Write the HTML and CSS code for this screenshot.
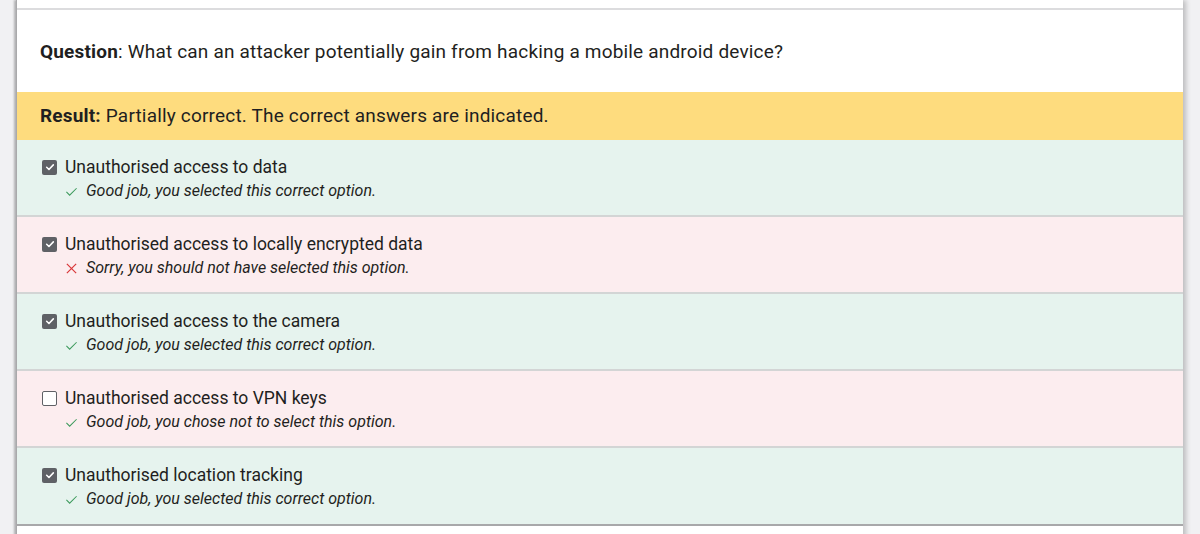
FILE: index.html
```html
<!DOCTYPE html>
<html>
<head>
<meta charset="utf-8">
<link rel="stylesheet" href="styles.css">
</head>
<body>
<div class="page">
  <div class="card">
    <div class="top-strip"></div>
    <div class="question"><b>Question</b>: What can an attacker potentially gain from hacking a mobile android device?</div>
    <div class="result"><b>Result:</b> Partially correct. The correct answers are indicated.</div>
    <div class="option good">
      <div class="opt-line"><span class="cb checked"><svg viewBox="0 0 16 16" width="16" height="16"><path d="M4.2 8.3 L6.8 10.8 L11.8 5.6" fill="none" stroke="#fff" stroke-width="1.8" stroke-linecap="round" stroke-linejoin="round"/></svg></span><span class="opt-text">Unauthorised access to data</span></div>
      <div class="fb"><svg class="ic" viewBox="0 0 14 14" width="14" height="14"><path d="M1.5 7.5 L5 11 L12.5 3.5" fill="none" stroke="#3d9a5c" stroke-width="1.1"/></svg><span>Good job, you selected this correct option.</span></div>
    </div>
    <div class="option bad">
      <div class="opt-line"><span class="cb checked"><svg viewBox="0 0 16 16" width="16" height="16"><path d="M4.2 8.3 L6.8 10.8 L11.8 5.6" fill="none" stroke="#fff" stroke-width="1.8" stroke-linecap="round" stroke-linejoin="round"/></svg></span><span class="opt-text">Unauthorised access to locally encrypted data</span></div>
      <div class="fb"><svg class="ic" viewBox="0 0 14 14" width="14" height="14"><path d="M2 2 L12 12 M12 2 L2 12" fill="none" stroke="#d9383a" stroke-width="1.3"/></svg><span>Sorry, you should not have selected this option.</span></div>
    </div>
    <div class="option good">
      <div class="opt-line"><span class="cb checked"><svg viewBox="0 0 16 16" width="16" height="16"><path d="M4.2 8.3 L6.8 10.8 L11.8 5.6" fill="none" stroke="#fff" stroke-width="1.8" stroke-linecap="round" stroke-linejoin="round"/></svg></span><span class="opt-text">Unauthorised access to the camera</span></div>
      <div class="fb"><svg class="ic" viewBox="0 0 14 14" width="14" height="14"><path d="M1.5 7.5 L5 11 L12.5 3.5" fill="none" stroke="#3d9a5c" stroke-width="1.1"/></svg><span>Good job, you selected this correct option.</span></div>
    </div>
    <div class="option bad">
      <div class="opt-line"><span class="cb"></span><span class="opt-text">Unauthorised access to VPN keys</span></div>
      <div class="fb"><svg class="ic" viewBox="0 0 14 14" width="14" height="14"><path d="M1.5 7.5 L5 11 L12.5 3.5" fill="none" stroke="#3d9a5c" stroke-width="1.1"/></svg><span>Good job, you chose not to select this option.</span></div>
    </div>
    <div class="option good last">
      <div class="opt-line"><span class="cb checked"><svg viewBox="0 0 16 16" width="16" height="16"><path d="M4.2 8.3 L6.8 10.8 L11.8 5.6" fill="none" stroke="#fff" stroke-width="1.8" stroke-linecap="round" stroke-linejoin="round"/></svg></span><span class="opt-text">Unauthorised location tracking</span></div>
      <div class="fb"><svg class="ic" viewBox="0 0 14 14" width="14" height="14"><path d="M1.5 7.5 L5 11 L12.5 3.5" fill="none" stroke="#3d9a5c" stroke-width="1.1"/></svg><span>Good job, you selected this correct option.</span></div>
    </div>
    <div class="next-strip"></div>
  </div>
</div>
</body>
</html>
```

FILE: styles.css
```css
html, body {
  margin: 0;
  padding: 0;
}
body {
  background: #f1f1f3;
  font-family: Roboto, "Liberation Sans", Arial, sans-serif;
  color: #1f1f21;
  height: 534px;
  overflow: hidden;
}
.page {
  padding: 0 17px 0 16px;
}
.card {
  background: #fff;
  box-shadow: -2px 0 2px rgba(0,0,0,0.25), 3px 0 5px rgba(0,0,0,0.22);
  border-left: 1px solid #a9a9ab;
}
.top-strip {
  height: 8px;
  background: #fff;
  border-bottom: 2px solid #dcdcde;
}
.question {
  height: 82px;
  box-sizing: border-box;
  padding: 31px 24px 0 23px;
  font-size: 19px;
  letter-spacing: 0.18px;
  line-height: 22px;
}
.question b, .result b {
  font-weight: 700;
}
.result {
  background: #fedc7e;
  height: 48px;
  box-sizing: border-box;
  padding: 13px 23px 0;
  font-size: 19px;
  letter-spacing: 0.18px;
  line-height: 22px;
}
.option {
  height: 77px;
  box-sizing: border-box;
  padding: 15px 24px 0 25px;
  border-bottom: 2px solid #d3d5d5;
}
.option.last {
  height: 78px;
  border-bottom: 2px solid #a8a8aa;
}
.good { background: #e6f3ee; }
.bad { background: #fcedef; }
.opt-line {
  display: flex;
  align-items: center;
  font-size: 17.5px;
  line-height: 24px;
}
.cb {
  width: 15px;
  height: 15px;
  box-sizing: border-box;
  border: 1.5px solid #5f6166;
  border-radius: 2px;
  background: #fff;
  margin-right: 8px;
  display: flex;
  align-items: center;
  justify-content: center;
  flex: none;
}
.cb.checked {
  background: #5f6166;
  border: none;
}
.cb svg { width: 14px; height: 14px; }
.fb {
  display: flex;
  align-items: center;
  margin-left: 23px;
  font-size: 16px;
  line-height: 24px;
  font-style: italic;
}
.fb .ic {
  width: 13px;
  height: 13px;
  margin-right: 8px;
  flex: none;
}
.next-strip {
  height: 20px;
  background: #fff;
}
```
